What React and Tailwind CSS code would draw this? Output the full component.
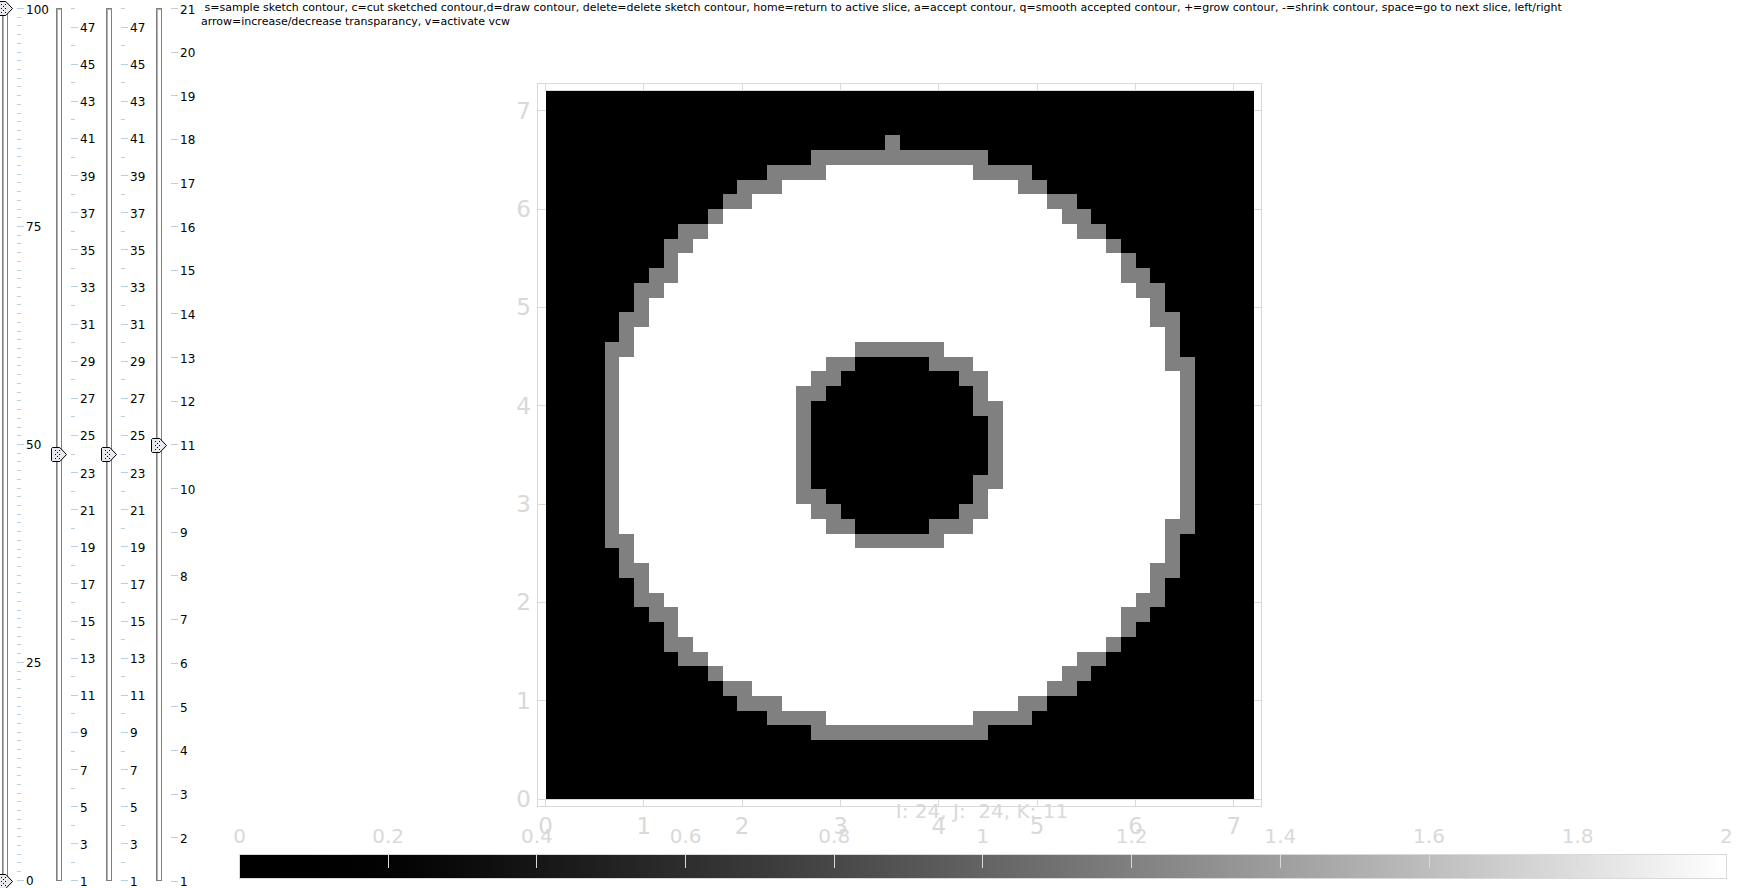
import { useState } from "react";

// Grey boundary cells per image row: [row, from, to, from, to, ...]
const OUTER = [
  [5, 15, 19, 29, 33], [6, 13, 16, 32, 34], [7, 12, 14, 34, 36], [8, 11, 12, 35, 37],
  [9, 9, 11, 36, 38], [10, 8, 10, 38, 39], [11, 8, 9, 39, 40], [12, 7, 9, 39, 41],
  [13, 6, 8, 40, 42], [14, 6, 7, 41, 42], [15, 5, 7, 41, 43], [16, 5, 6, 42, 43],
  [17, 4, 6, 42, 43], [18, 4, 5, 42, 44],
  ...[19, 20, 21, 22, 23, 24, 25, 26, 27, 28].map((r) => [r, 4, 5, 43, 44]),
  [29, 4, 5, 42, 44], [30, 4, 6, 42, 43], [31, 5, 6, 42, 43], [32, 5, 7, 41, 43],
  [33, 6, 7, 41, 42], [34, 6, 8, 40, 42], [35, 7, 9, 39, 41], [36, 8, 9, 39, 40],
  [37, 8, 10, 38, 39], [38, 9, 11, 36, 38], [39, 11, 12, 35, 37], [40, 12, 14, 34, 36],
  [41, 13, 16, 32, 34], [42, 15, 19, 29, 33],
];
const INNER = [
  [18, 19, 21, 26, 29], [19, 18, 20, 28, 30], [20, 17, 19, 29, 30], [21, 17, 18, 29, 31],
  [22, 17, 18, 30, 31], [23, 17, 18, 30, 31], [24, 17, 18, 30, 31], [25, 17, 18, 30, 31],
  [26, 17, 18, 29, 31], [27, 17, 19, 29, 30], [28, 18, 20, 28, 30], [29, 19, 21, 26, 29],
];
const CAPS = [[3, 23, 24], [4, 18, 30], [43, 18, 30], [17, 21, 27], [30, 21, 27]];

const cell = (row, from, to) => `M${from} ${row}H${to}V${row + 1}H${from}Z`;
const greyPath = [
  ...CAPS.map(([r, a, b]) => cell(r, a, b)),
  ...[...OUTER, ...INNER].map(([r, a, b, c, d]) => cell(r, a, b) + cell(r, c, d)),
].join("");
const whitePath = OUTER.map(([r, , b, c]) => cell(r, b, c)).join("");
const holePath = INNER.map(([r, , b, c]) => cell(r, b, c)).join("");

const DOTS = [[8, 3], [4, 3], [6, 5], [4, 7], [8, 7], [6, 9], [4, 11], [8, 11]];

function Thumb({ fraction }) {
  return (
    <svg
      className="absolute -left-[6px] -mt-[7px] h-[15px] w-[17px]"
      style={{ top: `${(1 - fraction) * 100}%` }}
      viewBox="0 0 17 15"
      aria-hidden="true"
    >
      <path d="M1.5 .5H8.8L15.5 7.5L8.8 14.5H1.5L.5 13.5V1.5Z" fill="#e8e8ee" stroke="#000" />
      {DOTS.map(([x, y]) => (
        <rect key={`${x}-${y}`} x={x} y={y} width="1" height="1" fill="#000" />
      ))}
    </svg>
  );
}

function Slider({ names, initial, min, max, isMajor, className }) {
  const [values, setValues] = useState(initial);
  const marks = Array.from({ length: max - min + 1 }, (_, i) => max - i);
  return (
    <div className={`flex shrink-0 pt-2 pb-[6px] pl-[2px] ${className}`}>
      <div className="relative mb-px w-[6px] border border-[#808080] bg-white shadow-[inset_1px_1px_0_#b0b0b0]">
        <div className="absolute -inset-y-px left-0">
          {values.map((value, i) => (
            <label key={names[i]}>
              <Thumb fraction={(value - min) / (max - min)} />
              <input
                type="range"
                aria-label={names[i]}
                min={min}
                max={max}
                value={value}
                onChange={(e) =>
                  setValues(values.map((v, j) => (j === i ? Number(e.target.value) : v)))
                }
                className="absolute inset-y-0 -left-[6px] h-full w-4 cursor-pointer opacity-0 [direction:rtl] [writing-mode:vertical-lr]"
              />
            </label>
          ))}
        </div>
      </div>
      <ol className="ml-[9px] flex flex-col justify-between text-[12px] leading-[14px]">
        {marks.map((mark) => (
          <li key={mark} className="flex h-px items-center gap-[2px]">
            <span className={`h-px bg-[#b8cfe5] ${isMajor(mark) ? "w-[7px]" : "w-1"}`} />
            {isMajor(mark) && <span className="pt-[2px]">{mark}</span>}
          </li>
        ))}
      </ol>
    </div>
  );
}

const UNIT = 98.33;
const LEFT = 344.5;
const TOP = 63;
const SIZE = 708;

function SlicePlot() {
  const axis = [0, 1, 2, 3, 4, 5, 6, 7];
  const frame = { left: 336.5, right: 1060.5, top: 55.5, bottom: 778.5 };
  return (
    <svg className="min-h-0 w-full flex-1" viewBox="0 0 1537 812" role="img" aria-label="Slice image">
      <g stroke="#d9d9d9" fill="none" shapeRendering="crispEdges">
        <rect x={frame.left} y={frame.top} width={frame.right - frame.left} height={frame.bottom - frame.top} />
        <path d={`M${frame.left} 771.5H${frame.right}M${LEFT} 62.5H${LEFT + SIZE}`} />
        {axis.map((n) => {
          const x = Math.floor(LEFT + n * UNIT) + 0.5;
          const y = Math.floor(TOP + SIZE - n * UNIT) + 0.5;
          return (
            <path
              key={n}
              d={`M${x} ${frame.top}V${TOP}M${x} 771V${frame.bottom}M${frame.left} ${y}H${LEFT}M${LEFT + SIZE} ${y}H${frame.right}`}
            />
          );
        })}
      </g>
      <g transform={`translate(${LEFT} ${TOP}) scale(14.75)`} shapeRendering="crispEdges">
        <rect width="48" height="48" fill="#000" />
        <path d={whitePath} fill="#fff" />
        <path d={holePath} fill="#000" />
        <path d={greyPath} fill="#808080" />
      </g>
      <g fill="#d9d9d9" fontSize="23">
        {axis.map((n) => (
          <g key={n}>
            <text x={LEFT + n * UNIT} y="806" textAnchor="middle">{n}</text>
            <text x="330" y={779 - n * UNIT} textAnchor="end">{n}</text>
          </g>
        ))}
        <text x="781" y="790" fontSize="20" textAnchor="middle" style={{ whiteSpace: "pre" }}>
          {"I: 24, J:  24, K: 11"}
        </text>
      </g>
    </svg>
  );
}

function ColorBar() {
  const stops = ["0", "0.2", "0.4", "0.6", "0.8", "1", "1.2", "1.4", "1.6", "1.8", "2"];
  return (
    <div className="relative -mt-[14px] pr-[11px] pb-[9px] pl-[38px]">
      <div className="flex justify-between pb-2 text-[20px] leading-5 text-[#d9d9d9]">
        {stops.map((s) => (
          <span key={s} className="flex w-px justify-center whitespace-nowrap">{s}</span>
        ))}
      </div>
      <div className="h-[25px] border border-[#d9d9d9] bg-linear-to-r from-black to-white">
        <div className="-mx-px flex justify-between">
          {stops.map((s) => (
            <span key={s} className="h-[13px] w-px bg-[#d9d9d9]" />
          ))}
        </div>
      </div>
    </div>
  );
}

export default function App() {
  const odd = (n) => n % 2 === 1 && n < 48;
  return (
    <div className="flex h-screen overflow-hidden bg-white font-['DejaVu_Sans',sans-serif] text-black">
      <Slider names={["Window minimum", "Window maximum"]} initial={[0, 100]} min={0} max={100} isMajor={(n) => n % 25 === 0} className="w-[54px]" />
      <Slider names={["Slice I"]} initial={[24]} min={1} max={48} isMajor={odd} className="w-[50px]" />
      <Slider names={["Slice J"]} initial={[24]} min={1} max={48} isMajor={odd} className="w-[50px]" />
      <Slider names={["Slice K"]} initial={[11]} min={1} max={21} isMajor={() => true} className="w-[47px]" />
      <main className="flex min-w-0 flex-1 flex-col">
        <p className="h-7 pt-px text-[11px] leading-[14px] whitespace-pre">
          {" s=sample sketch contour, c=cut sketched contour,d=draw contour, delete=delete sketch contour, home=return to active slice, a=accept contour, q=smooth accepted contour, +=grow contour, -=shrink contour, space=go to next slice, left/right"}
          <br />
          arrow=increase/decrease transparancy, v=activate vcw
        </p>
        <SlicePlot />
        <ColorBar />
      </main>
    </div>
  );
}
